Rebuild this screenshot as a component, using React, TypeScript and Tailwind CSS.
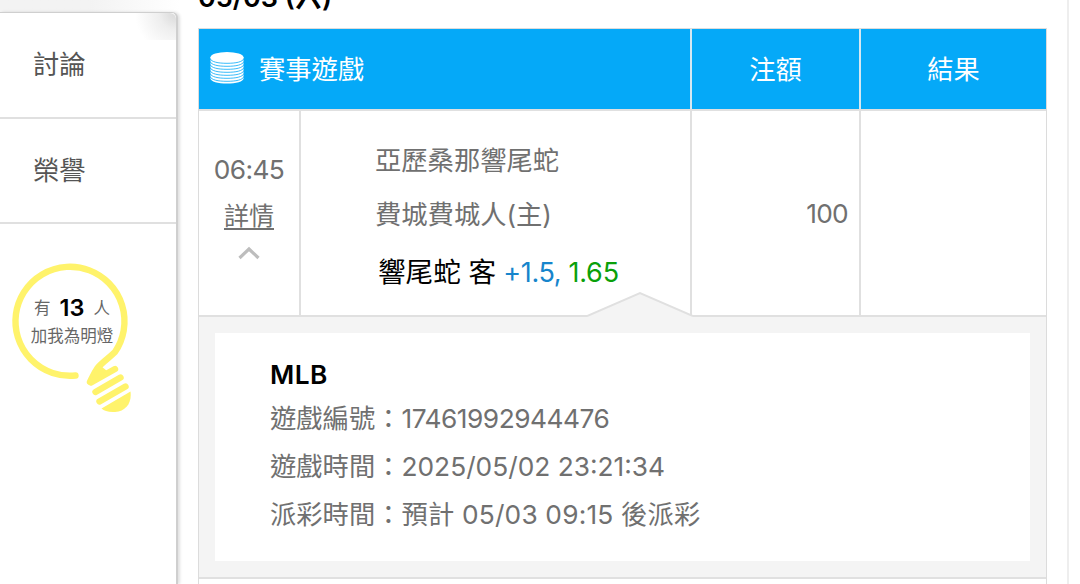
import React from "react";

const sideItems = ["討論", "榮譽"];

const details = [
    { label: "遊戲編號", value: "17461992944476", className: "tracking-[-0.5px]" },
    { label: "遊戲時間", value: "2025/05/02 23:21:34", className: "" },
    { label: "派彩時間", value: "預計 05/03 09:15 後派彩", className: "tracking-[0.18px]" },
];

const CoinsIcon: React.FC = () => (
    <svg className="-mt-[3px] h-[34px] w-[34px] shrink-0" viewBox="0 0 34 34" fill="none">
        <path d="M0.5 6v21.500c0 3 7.4 5 16.500 5s16.500-2 16.500-5V6z" fill="#fff" />
        <ellipse cx="17" cy="6.5" rx="16.500" ry="5.500" fill="#fff" />
        {[7.500, 10.500, 13.500, 16.500, 19.500, 22.500, 25.500].map((y) => (
            <path
                key={y}
                d="M0 0c1.500 3.500 8 4.800 17 4.800S32.500 3.500 34 0"
                transform={`translate(0 ${y})`}
                stroke="#05a9f8"
                strokeWidth="0.8"
            />
        ))}
    </svg>
);

const BulbIcon: React.FC = () => (
    <svg className="h-[152px] w-[122px]" viewBox="10 262 122 152" fill="none">
        <g stroke="#fff36b" strokeWidth="6.400" strokeLinecap="round" strokeLinejoin="round">
            <path d="M76.500 375.500A54.500 54.500 0 1 1 116 352C110 358 104 361.500 98.500 368C95 373 93 378 91 382" />
            <path d="M92 382.500L116 369" />
            <path d="M96.500 392L121.500 377.500" />
            <path d="M100.500 401.500L126.500 386.500" />
        </g>
        <path d="M96 371L102 366L108 371L93 381z" fill="#fff36b" />
        <path d="M102.500 408.500L131.500 391.500C133 403 127 411 116 412C110 412.500 105 411 102.500 408.500z" fill="#fff36b" />
    </svg>
);

const Sidebar: React.FC = () => (
    <aside className="flex w-[180px] shrink-0 flex-col">
        <div className="h-3 bg-linear-to-r from-[#f3f3f3] from-50% to-white" />
        <div className="relative w-[178px] flex-1 rounded-tr-md border-t border-r-2 border-[#cfcfcf] bg-white shadow-[2px_0_3px_rgba(0,0,0,0.12)]">
            {/* folded corner */}
            <div className="absolute top-0 right-0 h-[27px] w-10 rounded-tr-md bg-[radial-gradient(circle_at_top_right,#d8d8d8,#eeeeee_35%,#ffffff_85%)]" />
            {sideItems.map((item) => (
                <div
                    key={item}
                    className="relative flex h-[105.500px] items-center border-b-2 border-[#e0e0e0] pl-[33px] text-[26.300px] text-[#555]"
                >
                    {item}
                </div>
            ))}
            <div className="relative mt-[38px] ml-[9px] h-[152px] w-[122px]">
                <BulbIcon />
                <div className="absolute inset-x-0 top-8 flex flex-col items-center pl-[4px] text-[16.500px] leading-[28px] text-[#666]">
                    <div className="flex items-center gap-[9px]">
                        <span>有</span>
                        <b className="text-[23.500px] font-semibold text-black">13</b>
                        <span>人</span>
                    </div>
                    <div>加我為明燈</div>
                </div>
            </div>
        </div>
    </aside>
);

const HeaderRow: React.FC = () => (
    <div className="flex h-[80px] text-[26.300px] text-white">
        <div className="flex w-[491px] items-center bg-[#05a9f8] pt-[1px] pl-[11px]">
            <CoinsIcon />
            <span className="ml-[15px]">賽事遊戲</span>
        </div>
        <div className="flex w-[169px] items-center justify-center border-l-2 border-[#d5e8f2] bg-[#05a9f8] pt-[2px]">注額</div>
        <div className="flex flex-1 items-center justify-center border-l-2 border-[#d5e8f2] bg-[#05a9f8] pt-[2px]">結果</div>
    </div>
);

const BetRow: React.FC = () => (
    <div className="relative flex h-[208px] border-y-2 border-[#e0e0e0] text-[26.300px] text-[#707070]">
        <div className="flex w-[100px] flex-col items-center pt-[36px] leading-[46px]">
            <span className="tracking-[-0.6px]">06:45</span>
            <span className="text-[25px] underline decoration-2 underline-offset-[3px]">詳情</span>
            <svg className="mt-[7px] h-[14px] w-[22px]" viewBox="0 0 22 14" fill="none">
                <path d="M1.500 12L11 3l9.500 9" stroke="#bdbdbd" strokeWidth="3.200" />
            </svg>
        </div>
        <div className="flex w-[391px] flex-col border-l-2 border-[#e0e0e0] pt-[23px] pl-[74px] leading-[54px]">
            <span>亞歷桑那響尾蛇</span>
            <span>費城費城人(主)</span>
            <span className="mt-[3px] ml-[3px] text-[27px] whitespace-pre text-black">
                <span className="text-[27.600px]">響尾蛇 客</span>
                <span className="tracking-[-0.4px] text-[#1685cc]"> +1.5,</span>
                <span className="tracking-[-0.2px] text-[#0aa00a]"> 1.65</span>
            </span>
        </div>
        <div className="flex w-[169px] items-center justify-end border-l-2 border-[#e0e0e0] pt-[2px] pr-[11px] tracking-[-0.7px]">100</div>
        <div className="flex-1 border-l-2 border-[#e0e0e0]" />
        {/* pointer up from the detail panel */}
        <svg className="absolute -bottom-[3px] left-[388px] h-[27px] w-[106px]" viewBox="0 0 106 27">
            <path d="M0 27V25.500L53 2.500L106 25.500V27z" fill="#f4f4f4" />
            <path d="M0 25L53 2L106 25" fill="none" stroke="#e0e0e0" strokeWidth="2" />
        </svg>
    </div>
);

const DetailPanel: React.FC = () => (
    <div className="h-[260px] bg-[#f4f4f4] px-4 py-[16px]">
        <div className="h-[228px] bg-white pt-[24px] pl-[55px] text-[26.300px] text-[#707070]">
            <div className="mb-[2px] leading-[36px] font-semibold tracking-[0.5px] text-black">MLB</div>
            {details.map((row) => (
                <div key={row.label} className="flex leading-[48px] whitespace-pre">
                    <span>{row.label}：</span>
                    <span className={row.className}>{row.value}</span>
                </div>
            ))}
        </div>
    </div>
);

const App: React.FC = () => (
    <div className="flex h-[584px] w-[1080px] overflow-hidden bg-white font-['Inter','Noto_Sans_CJK_TC',sans-serif]">
        <Sidebar />
        <main className="flex w-[889px] flex-col border-r-2 border-[#eeeeee] pr-[20px] pl-[18px]">
            <div className="flex h-[28px] items-end">
                <h2 className="mb-[14px] text-[27px] leading-[32px] font-semibold whitespace-pre text-black">05/03 (六)</h2>
            </div>
            <section className="h-[556px] shrink-0 border border-b-0 border-[#dcdcdc]">
                <HeaderRow />
                <BetRow />
                <DetailPanel />
                <div className="h-5 border-t-2 border-[#e0e0e0] bg-white" />
            </section>
        </main>
    </div>
);

export default App;
